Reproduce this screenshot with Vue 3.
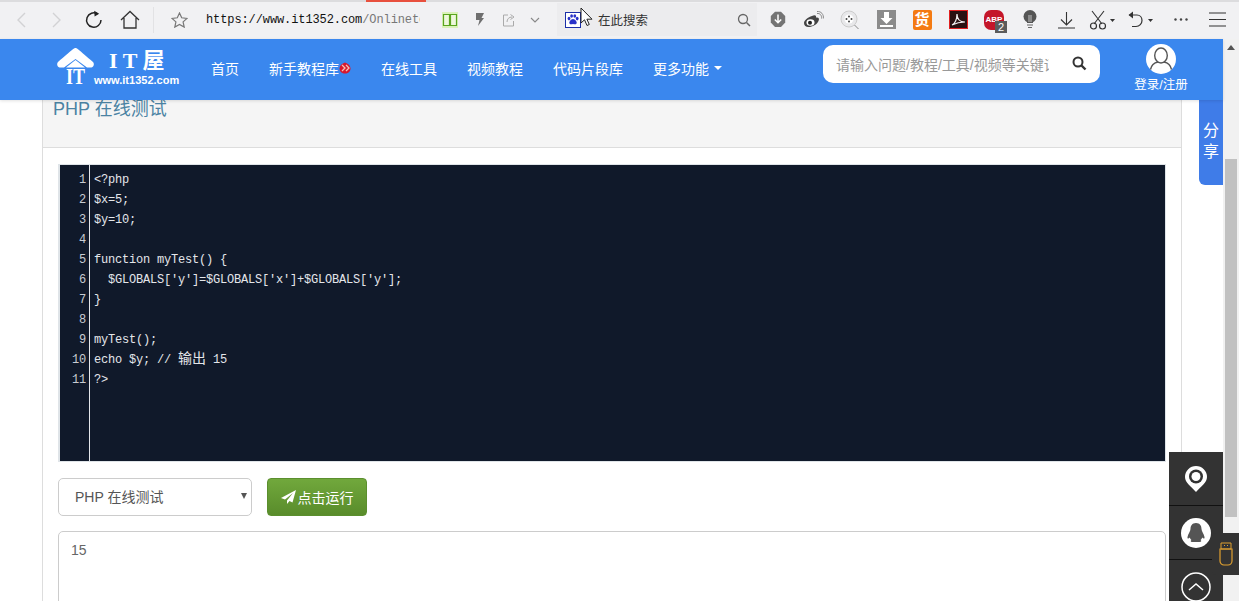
<script setup>
const navItems = [
  { label: '首页' },
  { label: '新手教程库', hot: true },
  { label: '在线工具' },
  { label: '视频教程' },
  { label: '代码片段库' },
  { label: '更多功能', caret: true }
]
const codeLines = [
  ['<?php'],
  ['$x=5;'],
  ['$y=10;'],
  [''],
  ['function myTest() {'],
  ['  $GLOBALS[\'y\']=$GLOBALS[\'x\']+$GLOBALS[\'y\'];'],
  ['}'],
  [''],
  ['myTest();'],
  ['echo $y; // ', '输出', ' 15'],
  ['?>']
]
</script>

<template>
  <div class="page">
    <div class="toolbar">
      <span class="red-line"></span>
      <span class="slot s36 first"><svg width="12" height="18" viewBox="0 0 12 18"><path d="M10 2 3 9l7 7" fill="none" stroke="#d2d2d4" stroke-width="1.4"/></svg></span>
      <span class="slot s36"><svg width="12" height="18" viewBox="0 0 12 18"><path d="m2 2 7 7-7 7" fill="none" stroke="#d2d2d4" stroke-width="1.4"/></svg></span>
      <span class="slot s38"><svg width="18" height="19" viewBox="0 0 18 19"><path d="M12.6 3.9A7.2 7.2 0 1 0 16 10" fill="none" stroke="#222" stroke-width="1.5"/><path d="M9.2 0.8 14.2 3.8 9.6 6.6z" fill="#222"/></svg></span>
      <span class="slot s34"><svg width="20" height="19" viewBox="0 0 20 19"><path d="M1 10 10 1.5 19 10M4 8v10h12V8" fill="none" stroke="#333" stroke-width="1.3"/></svg></span>
      <span class="divider"></span>
      <span class="slot s50"><svg width="17" height="16" viewBox="0 0 17 16"><path d="m8.5 1 2.2 4.8 5.3.6-3.9 3.5 1.1 5.2-4.7-2.6-4.7 2.6 1.1-5.2L1 6.4l5.3-.6z" fill="none" stroke="#777" stroke-width="1.2"/></svg></span>
      <div class="url"><span class="url-dark">https://www.it1352.com</span>/Onlinetools</div>
      <span class="slot s30 ml15"><svg width="16" height="16" viewBox="0 0 16 16"><rect width="16" height="16" fill="#d9f2b8"/><path d="M1.5 2.5h6v11h-6zM8.5 2.5h6v11h-6z" fill="#eef8dc" stroke="#5aa51f" stroke-width="1.2"/></svg></span>
      <span class="slot s30"><svg width="10" height="15" viewBox="0 0 10 15"><path d="M1 1h8L6.5 6H9l-6 8 1.5-6H1z" fill="#6f6f6f"/></svg></span>
      <span class="slot s28"><svg width="14" height="14" viewBox="0 0 14 14"><path d="M6 2H1.5v11h10V8M5 9c0-3 2-5 5-5M8.5 1.5 12 4 8.5 6.5" fill="none" stroke="#aaa" stroke-width="1"/></svg></span>
      <span class="slot s24"><svg width="10" height="6" viewBox="0 0 10 6"><path d="m1 1 4 4 4-4" fill="none" stroke="#888" stroke-width="1.1"/></svg></span>
      <div class="searchbox">
        <svg class="paw" width="16" height="16" viewBox="0 0 16 16"><rect x=".5" y=".5" width="15" height="15" fill="#fff" stroke="#1b2fa8"/><g fill="#2932c8"><ellipse cx="4" cy="6.6" rx="1.4" ry="1.8"/><ellipse cx="6.6" cy="4" rx="1.4" ry="1.8"/><ellipse cx="9.8" cy="4" rx="1.4" ry="1.8"/><ellipse cx="12.2" cy="6.6" rx="1.4" ry="1.8"/><path d="M8 7c2 0 4.500 3 3.500 4.500S9 12 8 12s-2.500 1-3.500-.5S6 7 8 7z"/></g></svg>
        <span class="search-label">在此搜索</span>
        <svg class="search-glass" width="14" height="14" viewBox="0 0 14 14"><circle cx="6" cy="6" r="4.500" fill="none" stroke="#666" stroke-width="1.300"/><path d="m9.500 9.500 3.500 3.500" stroke="#666" stroke-width="1.500"/></svg>
      </div>
      <div class="tools">
        <span class="slot s36"><svg width="16" height="17" viewBox="0 0 16 17"><path d="M5 .8h6l4.200 4.200v6.500L11 16H5L.8 11.500V5z" fill="#747474"/><path d="M8 3.500v8M4.800 8.500 8 11.700l3.200-3.200" fill="none" stroke="#fff" stroke-width="1.500"/></svg></span>
        <span class="slot s36"><svg width="20" height="18" viewBox="0 0 20 18"><path d="M8 5c3-1.500 4.500-.5 4 1.500 3-.5 3.500 1.500 2.500 3.500-1.500 3.500-6 6-10 6-2.500 0-4.500-1.500-4.500-4C0 9.500 4 6 8 5z" fill="#444"/><ellipse cx="6.500" cy="11.500" rx="4" ry="3.300" fill="#fff"/><circle cx="6" cy="11.800" r="2" fill="#222"/><path d="M13 2.500c3-.5 5 2 4.500 5M13 .5c4-.5 7 3 6.300 7" fill="none" stroke="#888" stroke-width="1"/></svg></span>
        <span class="slot s36"><svg width="20" height="20" viewBox="0 0 20 20"><circle cx="9" cy="9" r="8" fill="#e8e8ea" stroke="#ccc"/><circle cx="9" cy="9" r="4.500" fill="#fff"/><g fill="#444"><circle cx="9" cy="6.500" r="1"/><circle cx="6.500" cy="9" r="1"/><circle cx="11.500" cy="9" r="1"/><circle cx="9" cy="11.500" r="1"/></g><path d="m14.500 15 4 4" stroke="#888" stroke-width="1"/></svg></span>
        <span class="slot s36"><svg width="19" height="19" viewBox="0 0 19 19"><rect width="19" height="19" fill="#8b8b8b"/><path d="M7 2h5v6h3.500l-6 6-6-6H7z" fill="#fff"/><path d="M3 15h13v2H3z" fill="#fff"/></svg></span>
        <span class="slot s36"><span class="huo">货</span></span>
        <span class="slot s36"><svg width="19" height="19" viewBox="0 0 19 19"><rect x=".5" y=".5" width="18" height="18" fill="#2a1212" stroke="#e02020"/><path d="M3 15c3-1 5-6 5-11 0 5 3 8 8 8-4 0-9 1-13 3z" fill="none" stroke="#f2f2f2" stroke-width="1.200"/></svg></span>
        <span class="slot s36 abp-slot"><span class="abp">ABP</span><span class="abp-count">2</span></span>
        <span class="slot s36"><svg width="14" height="20" viewBox="0 0 14 20"><circle cx="7" cy="6.500" r="6.500" fill="#555"/><path d="M4 10h6v3H4z" fill="#555"/><path d="M6 5v7M8 5v7" stroke="#ddd" stroke-width=".8"/><path d="M4 15h6M5 17.500h4" stroke="#666" stroke-width="1.200"/></svg></span>
        <span class="slot s36"><svg width="17" height="18" viewBox="0 0 17 18"><path d="M8.500 1v13M3 8.500l5.500 5.500L14 8.500M0 17h17" fill="none" stroke="#333" stroke-width="1.100"/></svg></span>
        <span class="slot s36"><svg width="27" height="20" viewBox="0 0 27 20"><path d="M3 1 13 14M15 1 5 14" stroke="#333" fill="none" stroke-width="1.100"/><circle cx="4.500" cy="16" r="3" fill="none" stroke="#333" stroke-width="1.200"/><circle cx="13.500" cy="16" r="3" fill="none" stroke="#333" stroke-width="1.200"/><path d="m21 9 5 0-2.500 3z" fill="#333"/></svg></span>
        <span class="slot s40"><svg width="27" height="18" viewBox="0 0 27 18"><path d="M2 4h8c3 0 5 2.500 5 5.500S12.500 15.500 9 15.500H5" fill="none" stroke="#333" stroke-width="1.200"/><path d="M6 .5 1.500 4 6 7.500z" fill="#333"/><path d="m21 8 5 0-2.500 3z" fill="#333"/></svg></span>
        <span class="slot s42"><svg width="14" height="3" viewBox="0 0 14 3"><g fill="#444"><circle cx="1.500" cy="1.500" r="1.200"/><circle cx="7" cy="1.500" r="1.200"/><circle cx="12.500" cy="1.500" r="1.200"/></g></svg></span>
        <span class="slot s30"><svg width="17" height="15" viewBox="0 0 17 15"><path d="M0 1h17M0 7.500h17M0 14h17" stroke="#333" stroke-width="1.100"/></svg></span>
      </div>
    </div>

    <div class="viewport">
      <div class="content">
        <header class="site-header">
          <div class="logo">
            <svg width="37" height="38" viewBox="0 0 37 38">
              <path d="M18.500 0C20 0 22 2 36 14c1.500 1.500 1 5-1.500 5.500H30L18.500 11 7 19.500H2.500C0 19-.5 15.500 1 14 15 2 17 0 18.500 0z" fill="#fff"/>
              <path d="M9 19.500 18.500 12 28 19.500z" fill="#fff"/>
              <text x="18.500" y="36" text-anchor="middle" textLength="19" lengthAdjust="spacingAndGlyphs" class="logo-it">IT</text>
            </svg>
            <div class="logo-text">
              <div class="logo-name">I T 屋</div>
              <div class="logo-url">www.it1352.com</div>
            </div>
          </div>
          <nav class="nav">
            <a v-for="item in navItems" :key="item.label" class="nav-item">
              {{ item.label }}<svg v-if="item.hot" class="hot" width="12" height="12" viewBox="0 0 12 12"><path d="M6 .5c3 1 5.500 3 5.500 6 0 3-2.500 5-5.500 5S.5 9.500.5 6.500C.5 3.500 3 1.500 6 .5z" fill="#d8182e"/><path d="m3 3 3 3-3 3M7 3l3 3-3 3" fill="none" stroke="#f8c0b4" stroke-width="1.300"/></svg><span v-if="item.caret" class="caret"></span>
            </a>
          </nav>
          <div class="site-search">
            <span class="placeholder">请输入问题/教程/工具/视频等关键词</span>
            <svg width="15" height="15" viewBox="0 0 15 15"><circle cx="6" cy="6" r="4.500" fill="none" stroke="#333" stroke-width="2"/><path d="m9.500 9.500 4 4" stroke="#333" stroke-width="2.400"/></svg>
          </div>
          <div class="login">
            <svg width="30" height="30" viewBox="0 0 30 30"><circle cx="15" cy="15" r="15" fill="#fff"/><ellipse cx="15" cy="11.500" rx="6.300" ry="7.500" fill="none" stroke="#555" stroke-width="1.400"/><path d="M4.500 25.500c1-5 5-7 7.500-7.500M25.500 25.500c-1-5-5-7-7.500-7.500" fill="none" stroke="#555" stroke-width="1.400"/></svg>
            <span>登录/注册</span>
          </div>
        </header>

        <main class="panel">
          <div class="panel-heading"><h3>PHP 在线测试</h3></div>
          <div class="panel-body">
            <div class="editor">
              <div class="gutter">
                <div v-for="(line, i) in codeLines" :key="i" class="num">{{ i + 1 }}</div>
              </div>
              <div class="code">
                <div v-for="(line, i) in codeLines" :key="i" class="line"><template v-if="line.length === 3">{{ line[0] }}<span class="cjk">{{ line[1] }}</span>{{ line[2] }}</template><template v-else>{{ line[0] }}</template></div>
              </div>
            </div>
            <div class="controls">
              <div class="select-wrap">
                <select class="lang"><option>PHP 在线测试</option></select>
              </div>
              <button class="run">
                <svg width="15" height="14" viewBox="0 0 15 14"><path d="M15 0 0 8l4 1.500L12 3 6 10.500V14l2.500-3 3 1.500z" fill="#fff"/></svg>点击运行
              </button>
            </div>
            <div class="output">15</div>
          </div>
        </main>
      </div>

      <aside class="scrollbar">
        <span class="scroll-up"></span>
        <span class="scroll-thumb"></span>
      </aside>

      <div class="share">分<br>享</div>

      <div class="dock">
        <div class="dock-item">
          <svg width="22" height="26" viewBox="0 0 22 26"><path d="M11 0a11 11 0 0 1 11 11c0 6-6 9-11 15C6 20 0 17 0 11A11 11 0 0 1 11 0z" fill="#fff"/><circle cx="11" cy="10.500" r="7" fill="#333"/><circle cx="11" cy="10.500" r="4.500" fill="#fff"/></svg>
        </div>
        <div class="dock-item">
          <svg width="30" height="30" viewBox="0 0 30 30"><circle cx="15" cy="15" r="15" fill="#fff"/><path d="M15 5c4 0 5.500 3 5.500 6 0 2 2.500 5 3 8 .3 2-1 2-2.300.5-.3 1-1 2-1.700 2.500 1 .7 1.300 1.800-1 2h-3.500c-1 .2-3 0-3.500 0-2.300 0-2-1.300-1-2-.7-.5-1.400-1.500-1.700-2.500-1.300 1.500-2.600 1.500-2.300-.5.500-3 3-6 3-8 0-3 1.500-6 5.500-6z" fill="#555"/></svg>
        </div>
        <div class="dock-item">
          <svg width="30" height="30" viewBox="0 0 30 30"><circle cx="15" cy="15" r="14" fill="none" stroke="#fff" stroke-width="1.500"/><path d="m8 18 7-6 7 6" fill="none" stroke="#fff" stroke-width="1.500"/></svg>
        </div>
      </div>

      <div class="usb">
        <svg width="14" height="24" viewBox="0 0 14 24"><path d="M2 1h10v6H2z" fill="none" stroke="#dfa030"/><path d="M1 7h12v12a4 4 0 0 1-4 4H5a4 4 0 0 1-4-4z" fill="none" stroke="#dfa030" stroke-width="1.200"/><path d="M5 3.500h1M8 3.500h1" stroke="#dfa030"/></svg>
      </div>

      <svg class="cursor" width="13" height="20" viewBox="0 0 13 20"><path d="M1 1v15l3.500-3.200L7 18.500l2.300-1-2.400-5.300H12z" fill="#fff" stroke="#222" stroke-width="1"/></svg>
    </div>
  </div>
</template>

<style scoped>
.page {
  width: 1239px;
  height: 601px;
  overflow: hidden;
  position: relative;
  display: flex;
  flex-direction: column;
  background: #fff;
  font-family: "Liberation Sans", "Noto Sans CJK SC", sans-serif;
  font-size: 14px;
  color: #555;
}

/* browser toolbar */
.toolbar {
  height: 39px;
  flex: none;
  display: flex;
  align-items: center;
  position: relative;
  background: #f1f1f3;
  border-top: 2px solid #dcdcde;
  padding-bottom: 2px;
  box-sizing: border-box;
}
.red-line {
  position: absolute;
  left: 366px;
  top: -2px;
  width: 60px;
  height: 2px;
  background: #e8503e;
}
.slot {
  flex: none;
  display: flex;
  align-items: center;
  justify-content: center;
  height: 35px;
}
.first { margin-left: 3px; }
.s24 { width: 24px; }
.s28 { width: 28px; }
.s30 { width: 30px; }
.s34 { width: 34px; }
.s36 { width: 36px; }
.s38 { width: 38px; }
.s40 { width: 40px; }
.s42 { width: 42px; }
.s50 { width: 50px; }
.ml15 { margin-left: 15px; }
.divider {
  width: 1px;
  height: 26px;
  margin-left: 6px;
  background: #e2e2e4;
}
.url {
  width: 214px;
  margin-left: 2px;
  overflow: hidden;
  white-space: nowrap;
  font-family: "Liberation Mono", monospace;
  font-size: 12px;
  letter-spacing: -.1px;
  color: #777;
}
.url-dark { color: #111; }
.searchbox {
  width: 200px;
  height: 33px;
  margin-left: 10px;
  padding: 0 6px 0 8px;
  box-sizing: border-box;
  display: flex;
  align-items: center;
  background: #ececee;
}
.paw { flex: none; }
.search-label {
  margin-left: 17px;
  flex: 1;
  font-size: 12.500px;
  color: #333;
}
.tools {
  margin-left: 3px;
  display: flex;
  align-items: center;
}
.huo {
  width: 19px;
  height: 20px;
  border-radius: 2px;
  background: #f47a12;
  color: #fff;
  font-size: 15px;
  font-weight: 700;
  line-height: 20px;
  text-align: center;
}
.abp-slot { position: relative; }
.abp {
  width: 20px;
  height: 20px;
  border-radius: 7px;
  background: #c4162a;
  color: #fff;
  font-size: 8px;
  font-weight: 700;
  line-height: 20px;
  text-align: center;
}
.abp-count {
  position: absolute;
  left: 19px;
  top: 19px;
  width: 12px;
  height: 12px;
  background: #5c5c5c;
  color: #fff;
  font-size: 11px;
  line-height: 12px;
  text-align: center;
}

/* page area */
.viewport {
  flex: 1;
  min-height: 0;
  display: flex;
  position: relative;
}
.content {
  width: 1223px;
  flex: none;
  display: flex;
  flex-direction: column;
  min-height: 0;
}
.site-header {
  height: 61px;
  flex: none;
  display: flex;
  align-items: center;
  padding-left: 57px;
  background: #3a87ee;
  color: #fff;
  position: relative;
  z-index: 2;
  box-shadow: 0 1px 3px rgba(0, 0, 0, .12);
}
.logo {
  width: 154px;
  flex: none;
  display: flex;
  align-items: flex-end;
  margin-top: -5px;
}
.logo-it {
  font-family: "Liberation Serif", serif;
  font-size: 23px;
  font-weight: 700;
  fill: #fff;
}
.logo-name {
  font-family: "Liberation Serif", "Noto Sans CJK SC", serif;
  font-size: 22px;
  font-weight: 700;
  line-height: 26px;
  margin-left: 15px;
  white-space: nowrap;
}
.logo-url {
  font-size: 11px;
  font-weight: 700;
  line-height: 12px;
  white-space: nowrap;
}
.nav {
  display: flex;
  gap: 30px;
  width: 612px;
  flex: none;
  margin-top: -4px;
}
.nav-item {
  display: flex;
  align-items: center;
  line-height: 20px;
  white-space: nowrap;
  font-family: "Noto Sans CJK SC", sans-serif;
  font-size: 14px;
  letter-spacing: 0;
}
.caret {
  margin-left: 5px;
  border-top: 4px solid #fff;
  border-left: 4px solid transparent;
  border-right: 4px solid transparent;
}
.site-search {
  width: 277px;
  height: 38px;
  flex: none;
  margin-top: -12px;
  box-sizing: border-box;
  padding: 0 13px;
  display: flex;
  align-items: center;
  justify-content: space-between;
  background: #fff;
  border-radius: 10px;
}
.placeholder {
  width: 213px;
  overflow: hidden;
  white-space: nowrap;
  font-family: "Liberation Sans", "Noto Sans CJK SC", sans-serif;
  color: #999;
  font-size: 14px;
}
.login {
  width: 52px;
  margin-left: 35px;
  flex: none;
  display: flex;
  flex-direction: column;
  align-items: center;
  gap: 2px;
  font-family: "Liberation Sans", "Noto Sans CJK SC", sans-serif;
  font-size: 12.500px;
  line-height: 18px;
  margin-top: -1px;
  white-space: nowrap;
}
.panel {
  margin-left: 42px;
  width: 1140px;
  box-sizing: border-box;
  flex: none;
  border-left: 1px solid #ddd;
  border-right: 1px solid #ddd;
}
.panel-heading {
  height: 48px;
  box-sizing: border-box;
  padding: 0 10px;
  background: #f5f5f5;
  border-bottom: 1px solid #ddd;
}
.panel-heading h3 {
  margin: 0;
  font-size: 18px;
  font-weight: 400;
  line-height: 18px;
  color: #4b83a3;
}
.panel-body {
  padding: 16px 15px 0;
}
.editor {
  width: 1108px;
  height: 298px;
  box-sizing: border-box;
  border: solid #dfe4e8;
  border-width: 1px 1px 1px 2px;
  background: #10192a;
  display: flex;
  font-family: "Liberation Mono", "Noto Sans CJK SC", monospace;
  font-size: 12px;
  line-height: 20px;
  letter-spacing: -.2px;
  color: #e4e6ea;
}
.gutter {
  width: 30px;
  box-sizing: border-box;
  flex: none;
  padding: 5px 3px 0 0;
  border-right: 1px solid #e4e6ea;
  text-align: right;
}
.num { height: 20px; color: #c8ccd2; }
.code {
  padding: 5px 0 0 4px;
  flex: 1;
}
.line {
  height: 20px;
  white-space: pre;
}
.cjk {
  font-family: "Noto Sans CJK SC", sans-serif;
  font-size: 14px;
  line-height: 0;
  letter-spacing: 0;
}
.controls {
  display: flex;
  margin-top: 16px;
  gap: 15px;
}
.select-wrap {
  position: relative;
  width: 194px;
  height: 38px;
}
.select-wrap::after {
  content: "";
  position: absolute;
  right: 5px;
  top: 15px;
  border-top: 6px solid #555;
  border-left: 3px solid transparent;
  border-right: 3px solid transparent;
  pointer-events: none;
}
.lang {
  width: 100%;
  height: 100%;
  appearance: none;
  box-sizing: border-box;
  padding: 0 16px;
  border: 1px solid #ccc;
  border-radius: 5px;
  background: #fff;
  font-family: "Liberation Sans", "Noto Sans CJK SC", sans-serif;
  font-size: 14px;
  color: #555;
}
.run {
  width: 100px;
  height: 38px;
  padding: 0;
  display: flex;
  align-items: center;
  justify-content: center;
  gap: 2px;
  border: 1px solid #5b8f2e;
  border-radius: 4px;
  background: linear-gradient(#71a83c, #598c2b);
  color: #fff;
  font-family: "Noto Sans CJK SC", sans-serif;
  font-size: 14px;
}
.output {
  margin-top: 15px;
  width: 1108px;
  height: 120px;
  box-sizing: border-box;
  padding: 8px 12px;
  border: 1px solid #ccc;
  border-radius: 5px;
  line-height: 20px;
  color: #666;
}

/* scrollbar */
.scrollbar {
  width: 16px;
  flex: none;
  position: relative;
  background: #f1f1f1;
}
.scroll-up {
  position: absolute;
  left: 4px;
  top: 6px;
  border-bottom: 5px solid #555;
  border-left: 4px solid transparent;
  border-right: 4px solid transparent;
}
.scroll-thumb {
  position: absolute;
  left: 2px;
  top: 120px;
  width: 12px;
  height: 358px;
  background: #c1c1c1;
}

/* floating parts */
.share {
  position: absolute;
  left: 1199px;
  top: 59px;
  width: 24px;
  height: 87px;
  z-index: 1;
  box-sizing: border-box;
  padding-top: 21px;
  background: #3f7ce8;
  border-bottom-left-radius: 6px;
  color: #fff;
  font-family: "Noto Sans CJK SC", sans-serif;
  font-size: 16px;
  line-height: 21px;
  text-align: center;
}
.dock {
  position: absolute;
  left: 1169px;
  top: 413px;
  width: 54px;
  background: #333;
}
.dock-item {
  height: 54px;
  box-sizing: border-box;
  display: flex;
  align-items: center;
  justify-content: center;
  border-bottom: 1px solid #111;
}
.usb {
  position: absolute;
  left: 1212px;
  top: 494px;
  width: 27px;
  height: 42px;
  display: flex;
  align-items: center;
  justify-content: center;
  background: #333;
  border-radius: 4px 0 0 4px;
}
.cursor {
  position: absolute;
  left: 580px;
  top: -32px;
  z-index: 5;
}
</style>
